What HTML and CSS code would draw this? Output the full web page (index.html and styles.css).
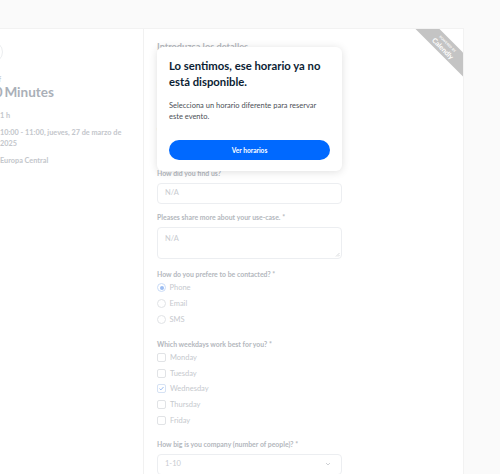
FILE: index.html
```html
<!DOCTYPE html>
<html lang="es">
<head>
<meta charset="utf-8">
<title>Calendly</title>
<link rel="stylesheet" href="styles.css">
</head>
<body>
<div class="page">
  <div class="card">
    <aside class="event">
      <div class="back">
        <svg width="10" height="10" viewBox="0 0 10 10"><path d="M8 5H2M5 2L2 5l3 3" fill="none" stroke="#9cc0f7" stroke-width="1.2" stroke-linecap="round" stroke-linejoin="round"/></svg>
      </div>
      <div class="host">Jef</div>
      <h1 class="title">60 Minutes</h1>
      <ul class="details">
        <li><svg class="ico" viewBox="0 0 10 10"><circle cx="5" cy="5" r="4" fill="none" stroke="#c8cbd0"/><path d="M5 3v2.2l1.4 1" fill="none" stroke="#c8cbd0"/></svg><span>1 h</span></li>
        <li><svg class="ico" viewBox="0 0 10 10"><rect x="1" y="2" width="8" height="7" rx="1" fill="none" stroke="#c8cbd0"/><path d="M1 4.5h8" stroke="#c8cbd0"/></svg><span>10:00 - 11:00, jueves, 27 de marzo de 2025</span></li>
        <li><svg class="ico" viewBox="0 0 10 10"><circle cx="5" cy="5" r="4" fill="none" stroke="#c8cbd0"/><path d="M1 5h8M5 1c-2 2.5-2 5.5 0 8M5 1c2 2.5 2 5.5 0 8" fill="none" stroke="#c8cbd0"/></svg><span>Europa Central</span></li>
      </ul>
    </aside>

    <main class="form">
      <h2 class="form-title">Introduzca los detalles</h2>

      <div class="field">
        <label class="label">Nombre *</label>
        <div class="input"></div>
      </div>
      <div class="field">
        <label class="label">Correo electrónico *</label>
        <div class="input"></div>
      </div>
      <div class="field">
        <label class="label">How did you find us?</label>
        <div class="input"><span class="ph">N/A</span></div>
      </div>
      <div class="field field-area">
        <label class="label">Pleases share more about your use-case. *</label>
        <div class="input area"><span class="ph">N/A</span>
          <svg class="grip" width="5" height="5" viewBox="0 0 5 5"><path d="M4.5 1L1 4.5M4.5 3L3 4.5" stroke="#c9ccd0" stroke-width=".7"/></svg>
        </div>
      </div>
      <div class="field field-group">
        <label class="label">How do you prefere to be contacted? *</label>
        <div class="choice"><span class="radio on"></span><span>Phone</span></div>
        <div class="choice"><span class="radio"></span><span>Email</span></div>
        <div class="choice"><span class="radio"></span><span>SMS</span></div>
      </div>
      <div class="field field-group">
        <label class="label">Which weekdays work best for you? *</label>
        <div class="choice check-row"><span class="box"></span><span>Monday</span></div>
        <div class="choice check-row"><span class="box"></span><span>Tuesday</span></div>
        <div class="choice check-row"><span class="box on"><svg width="7" height="7" viewBox="0 0 7 7"><path d="M1.5 3.6l1.4 1.3L5.5 2" fill="none" stroke="#8fb4ef" stroke-width=".9"/></svg></span><span>Wednesday</span></div>
        <div class="choice check-row"><span class="box"></span><span>Thursday</span></div>
        <div class="choice check-row"><span class="box"></span><span>Friday</span></div>
      </div>
      <div class="field">
        <label class="label">How big is you company (number of people)? *</label>
        <div class="input select"><span class="val">1-10</span>
          <svg width="6" height="4" viewBox="0 0 6 4"><path d="M1 1l2 2 2-2" fill="none" stroke="#c9ccd0" stroke-width=".9"/></svg>
        </div>
      </div>

      <div class="modal">
        <h3 class="modal-title">Lo sentimos, ese horario ya no está disponible.</h3>
        <p class="modal-text">Selecciona un horario diferente para reservar este evento.</p>
        <button class="modal-btn">Ver horarios</button>
      </div>
    </main>

    <div class="ribbon">
      <span class="ribbon-small">POWERED BY</span>
      <span class="ribbon-big">Calendly</span>
    </div>
  </div>
</div>
</body>
</html>
```

FILE: styles.css
```css
* { box-sizing: border-box; }
html, body { margin: 0; padding: 0; }
body {
  background: #fafafa;
  font-family: "Lato", "Liberation Sans", sans-serif;
  overflow: hidden;
  width: 500px;
  height: 474px;
}
.page {
  padding-top: 29px;
}
.card {
  position: relative;
  margin-left: -39px;
  width: 502px;
  height: 480px;
  background: #fff;
  display: flex;
  overflow: hidden;
  box-shadow: 0 0 0 1px #f2f2f2;
}

/* Left column */
.event {
  width: 183px;
  flex: none;
  border-right: 1px solid #f1f1f1;
  padding: 12px 12px 0 25px;
}
.back {
  width: 22px;
  height: 22px;
  border-radius: 50%;
  border: 1px solid #eceef0;
  margin-left: -5px;
  display: flex;
  align-items: center;
  justify-content: center;
}
.host {
  margin-top: 11px;
  margin-left: 6px;
  font-size: 7px;
  line-height: 10px;
  font-weight: 700;
  color: #c6c9ce;
}
.title {
  margin: 0 0 0 1px;
  font-size: 13.5px;
  line-height: 16px;
  font-weight: 700;
  word-spacing: -1.5px;
  color: #aab0b8;
}
.details {
  list-style: none;
  margin: 10.25px 0 0;
  padding: 0;
  display: flex;
  flex-direction: column;
  gap: 5px;
}
.details li {
  display: flex;
  gap: 4px;
  font-size: 7.3px;
  line-height: 11.5px;
  font-weight: 700;
  color: #c3c6cb;
}
.ico {
  width: 10px;
  height: 10px;
  flex: none;
  margin-top: 1px;
}

/* Form column */
.form {
  position: relative;
  flex: 1;
  padding: 12px 0 0 13px;
}
.form-title {
  margin: 0 0 28px;
  font-size: 9.2px;
  line-height: 11px;
  font-weight: 700;
  color: #b6b9be;
}
.field {
  width: 185px;
  margin-bottom: 8.5px;
}
.field-area { margin-bottom: 10px; }
.field-group { margin-bottom: 11px; }
.label {
  display: block;
  font-size: 6.9px;
  line-height: 11px;
  font-weight: 700;
  color: #b3b7bd;
  margin-bottom: 3.5px;
}
.input {
  position: relative;
  height: 21px;
  border: 1px solid #eceef1;
  border-radius: 4px;
  padding: 0 7px;
  display: flex;
  align-items: center;
  font-size: 7.5px;
  color: #c8cbd0;
}
.input.area {
  height: 32px;
  align-items: flex-start;
  padding-top: 6px;
}
.grip {
  position: absolute;
  right: 1px;
  bottom: 1px;
}
.ph, .val { line-height: 10px; }
.select { justify-content: space-between; padding-right: 10px; }

.field-group .label { margin-bottom: 0; }
.choice {
  display: flex;
  align-items: center;
  gap: 3.5px;
  height: 16px;
  font-size: 7.5px;
  color: #c6c9ce;
}
.check-row { height: 15.75px; gap: 4px; }
.radio {
  width: 9px;
  height: 9px;
  border-radius: 50%;
  border: 1px solid #e1e3e6;
  position: relative;
  flex: none;
}
.radio.on { border-color: #cadcf7; }
.radio.on::after {
  content: "";
  position: absolute;
  left: 1.5px;
  top: 1.5px;
  width: 4px;
  height: 4px;
  border-radius: 50%;
  background: #9cbdf3;
}
.box {
  width: 9px;
  height: 9px;
  border-radius: 2px;
  border: 1px solid #e1e3e6;
  flex: none;
  display: flex;
  align-items: center;
  justify-content: center;
}
.box.on { border-color: #d6e2f4; }

/* Modal */
.modal {
  position: absolute;
  left: 13px;
  top: 18px;
  width: 185px;
  height: 124px;
  background: #fff;
  border-radius: 6px;
  box-shadow: 0 1px 8px rgba(0, 0, 0, 0.13);
  padding: 11px 12px 0;
}
.modal-title {
  margin: 0;
  font-size: 11.3px;
  line-height: 16px;
  font-weight: 700;
  color: #0b1d33;
}
.modal-text {
  margin: 11px 0 0;
  font-size: 7.5px;
  line-height: 10.7px;
  color: #4b4f56;
}
.modal-btn {
  display: block;
  margin-top: 18px;
  width: 100%;
  height: 20px;
  border: none;
  border-radius: 10px;
  background: #0069ff;
  color: #fff;
  font-family: inherit;
  font-size: 6.6px;
  font-weight: 700;
  padding: 0;
}

/* Ribbon */
.ribbon {
  position: absolute;
  top: 9.25px;
  right: -32.25px;
  width: 100px;
  height: 17px;
  background: #c4c4c4;
  transform: rotate(45deg);
  display: flex;
  flex-direction: column;
  align-items: center;
  justify-content: center;
  color: #fff;
}
.ribbon-small {
  font-size: 3.2px;
  line-height: 4px;
  font-weight: 700;
  letter-spacing: 0.1px;
}
.ribbon-big {
  font-size: 7px;
  line-height: 8px;
  font-weight: 700;
}
```
